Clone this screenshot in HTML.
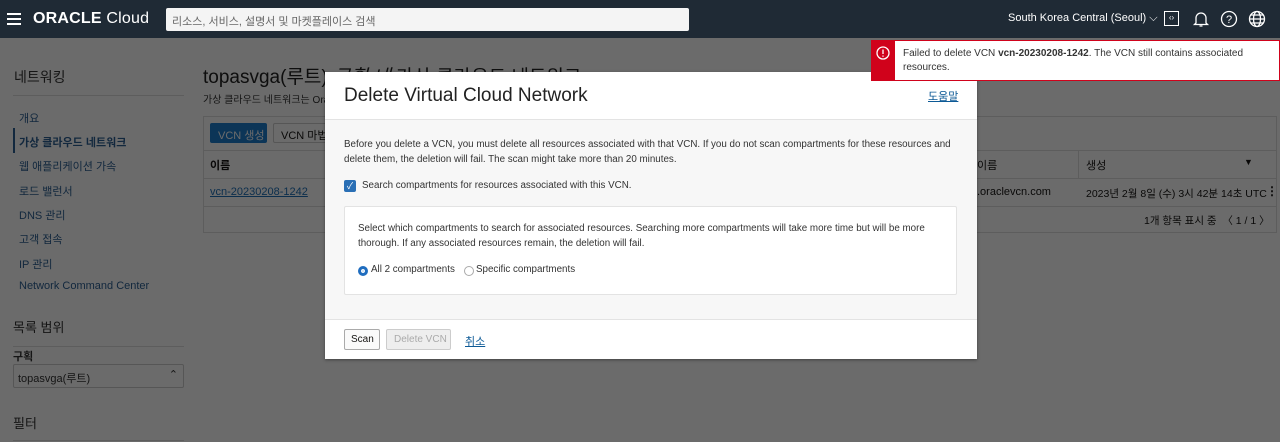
<!DOCTYPE html><html><head><meta charset="utf-8"><style>
*{box-sizing:border-box;margin:0;padding:0}
html,body{width:1280px;height:442px;overflow:hidden;background:#fff}
body{font-family:"Liberation Sans","Noto Sans CJK KR",sans-serif;font-size:12px;color:#161513;position:relative}
.a{position:absolute;white-space:nowrap}
.top{position:absolute;left:0;top:0;width:1280px;height:38px;background:#1f2a35;z-index:5}
.side{color:#2d5f93}
.ov{position:absolute;left:0;top:38px;width:1280px;height:404px;background:rgba(0,0,0,0.58);z-index:2}
.modal{z-index:3}
.toast{z-index:4}
</style></head><body>
<div class="top">
<div class="a" style="left:7px;top:13px;width:14px;height:2px;background:#fff;box-shadow:0 5px #fff,0 10px #fff"></div>
<div class="a" style="left:33px;top:10px;color:#fff;font-size:16px;font-weight:bold;letter-spacing:0.2px">ORACLE <span style="font-weight:normal">Cloud</span></div>
<div class="a" style="left:166px;top:8px;width:523px;height:23px;background:#f4f4f4;border-radius:2px;color:#666;font-size:11px;padding:5px 6px">리소스, 서비스, 설명서 및 마켓플레이스 검색</div>
<div class="a" style="left:1008px;top:12px;color:#fff;font-size:11px">South Korea Central (Seoul) ⌵</div>
<div class="a" style="left:1164px;top:11px;width:15px;height:15px;border:1.5px solid #fff;font-size:8px;color:#fff;text-align:center;line-height:12px">‹›</div>
<svg class="a" style="left:1192px;top:10px" width="18" height="18" fill="none" stroke="#fff" stroke-width="1.3"><path d="M4 13V8a5 5 0 0110 0v5l1.5 1.5h-13z M7.5 16h3"/></svg>
<svg class="a" style="left:1220px;top:10px" width="18" height="18" fill="none" stroke="#fff" stroke-width="1.3"><circle cx="9" cy="9" r="7.5"/><text x="6" y="13" fill="#fff" stroke="none" font-size="11" font-family="Liberation Sans">?</text></svg>
<svg class="a" style="left:1248px;top:10px" width="18" height="18" fill="none" stroke="#fff" stroke-width="1.3"><circle cx="9" cy="9" r="7.5"/><ellipse cx="9" cy="9" rx="3.5" ry="7.5"/><path d="M1.5 9h15M3 5h12M3 13h12"/></svg>
</div>
<div class="a" style="left:14px;top:67px;font-size:14px;color:#333">네트워킹</div>
<div class="a" style="left:13px;top:95px;width:171px;height:1px;background:#ddd"></div>
<div class="a side" style="left:19px;top:110px;font-size:11px">개요</div>
<div class="a" style="left:13px;top:128px;width:2px;height:25px;background:#2d5f93"></div>
<div class="a side" style="left:19px;top:134px;font-size:11px;font-weight:bold">가상 클라우드 네트워크</div>
<div class="a side" style="left:19px;top:158px;font-size:11px">웹 애플리케이션 가속</div>
<div class="a side" style="left:19px;top:183px;font-size:11px">로드 밸런서</div>
<div class="a side" style="left:19px;top:207px;font-size:11px">DNS 관리</div>
<div class="a side" style="left:19px;top:231px;font-size:11px">고객 접속</div>
<div class="a side" style="left:19px;top:256px;font-size:11px">IP 관리</div>
<div class="a side" style="left:19px;top:280px;font-size:11px">Network Command Center</div>
<div class="a" style="left:13px;top:317px;font-size:13px;color:#333">목록 범위</div>
<div class="a" style="left:13px;top:346px;width:171px;height:1px;background:#ddd"></div>
<div class="a" style="left:13px;top:348px;font-size:11px;font-weight:bold;color:#333">구획</div>
<div class="a" style="left:13px;top:364px;width:171px;height:24px;border:1px solid #ccc;border-radius:2px;font-size:11px;padding:5px 4px;color:#333">topasvga(루트)<span style="position:absolute;right:5px;top:3px">⌃</span></div>
<div class="a" style="left:13px;top:413px;font-size:13px;color:#333">필터</div>
<div class="a" style="left:13px;top:440px;width:171px;height:1px;background:#ddd"></div>
<div class="a" style="left:203px;top:62px;font-size:19px;color:#222">topasvga(루트) <i>구획 내</i> 가상 클라우드 네트워크</div>
<div class="a" style="left:203px;top:91px;font-size:10px;color:#333">가상 클라우드 네트워크는 Oracle Cloud Infrastructure에서 설정된 가상 사설 네트워크로, 기존 데이터 센터에서 운영 중인 기존 네트워크와 매우 유사합니다.</div>
<div class="a" style="left:203px;top:116px;width:1074px;height:117px;border:1px solid #ddd"></div>
<div class="a" style="left:210px;top:123px;width:57px;height:20px;background:#1d7ecf;border-radius:2px;color:#fff;font-size:11px;padding:4px 8px">VCN 생성</div>
<div class="a" style="left:273px;top:123px;width:60px;height:20px;border:1px solid #ccc;border-radius:2px;font-size:11px;padding:3px 7px">VCN 마법사</div>
<div class="a" style="left:203px;top:150px;width:1074px;height:1px;background:#ddd"></div>
<div class="a" style="left:203px;top:178px;width:1074px;height:1px;background:#ddd"></div>
<div class="a" style="left:203px;top:206px;width:1074px;height:1px;background:#ddd"></div>
<div class="a" style="left:1078px;top:151px;width:1px;height:27px;background:#ddd"></div>
<div class="a" style="left:210px;top:157px;font-size:11px;font-weight:bold">이름</div>
<div class="a" style="left:210px;top:186px;font-size:11px;color:#1f70b8;text-decoration:underline">vcn-20230208-1242</div>
<div class="a" style="left:977px;top:157px;font-size:11px">이름</div>
<div class="a" style="left:1086px;top:157px;font-size:11px">생성</div>
<div class="a" style="left:1244px;top:157px;font-size:9px">▼</div>
<div class="a" style="left:977px;top:186px;font-size:11px">.oraclevcn.com</div>
<div class="a" style="left:1086px;top:186px;font-size:10.5px">2023년 2월 8일 (수) 3시 42분 14초 UTC</div>
<div class="a" style="left:1266px;top:184px;font-size:12px;font-weight:bold">⋮</div>
<div class="a" style="left:1144px;top:213px;font-size:10.5px">1개 항목 표시 중 &nbsp;〈 1 / 1 〉</div>

<div class="ov"></div>

<div class="a toast" style="left:871px;top:40px;width:409px;height:41px;background:#fff;border:1px solid #d0021b;border-left:none"></div>
<div class="a toast" style="left:871px;top:40px;width:24px;height:41px;background:#d0021b"></div>
<svg class="a toast" style="left:876px;top:46px" width="14" height="14" fill="none" stroke="#fff" stroke-width="1.3"><circle cx="7" cy="7" r="6"/><path d="M7 3.5v4.5M7 9.5v1.3"/></svg>
<div class="a toast" style="left:903px;top:47px;font-size:10px;line-height:14px;color:#333;white-space:normal;width:360px">Failed to delete VCN <b>vcn-20230208-1242</b>. The VCN still contains associated resources.</div>

<div class="a modal" style="left:325px;top:72px;width:652px;height:287px;background:#fff;box-shadow:0 1px 3px rgba(0,0,0,.4)">
<div class="a" style="left:19px;top:13px;font-size:19px;color:#222">Delete Virtual Cloud Network</div>
<div class="a" style="left:603px;top:16px;font-size:11px;color:#0d5a96;text-decoration:underline">도움말</div>
<div class="a" style="left:0;top:47px;width:652px;height:201px;background:#f7f7f7;border-top:1px solid #e3e3e3;border-bottom:1px solid #e3e3e3"></div>
<div class="a" style="left:19px;top:65px;font-size:9.8px;line-height:15px;color:#333">Before you delete a VCN, you must delete all resources associated with that VCN. If you do not scan compartments for these resources and<br>delete them, the deletion will fail. The scan might take more than 20 minutes.</div>
<div class="a" style="left:19px;top:108px;width:12px;height:12px;background:#2a6fb5;border-radius:2px;color:#fff;font-size:9px;line-height:12px;text-align:center">✓</div>
<div class="a" style="left:37px;top:108px;font-size:9.8px;color:#333">Search compartments for resources associated with this VCN.</div>
<div class="a" style="left:19px;top:134px;width:613px;height:89px;background:#fff;border:1px solid #e3e3e3;border-radius:2px"></div>
<div class="a" style="left:33px;top:149px;font-size:9.8px;line-height:15px;color:#333">Select which compartments to search for associated resources. Searching more compartments will take more time but will be more<br>thorough. If any associated resources remain, the deletion will fail.</div>
<div class="a" style="left:33px;top:194px;width:10px;height:10px;border-radius:50%;background:#1f6dbf;border:3px solid #1f6dbf;box-shadow:inset 0 0 0 1.5px #fff"></div>
<div class="a" style="left:46px;top:192px;font-size:9.8px;color:#333">All 2 compartments</div>
<div class="a" style="left:139px;top:194px;width:10px;height:10px;border-radius:50%;border:1px solid #aaa"></div>
<div class="a" style="left:151px;top:192px;font-size:9.8px;color:#333">Specific compartments</div>
<div class="a" style="left:19px;top:257px;width:36px;height:21px;border:1px solid #aaa;border-radius:2px;background:#fafafa;font-size:10px;padding:4px 6px">Scan</div>
<div class="a" style="left:61px;top:257px;width:65px;height:21px;border:1px solid #ccc;border-radius:2px;background:#eee;color:#aaa;font-size:10px;padding:4px 7px">Delete VCN</div>
<div class="a" style="left:140px;top:261px;font-size:11px;color:#0d5a96;text-decoration:underline">취소</div>
</div>
</body></html>
